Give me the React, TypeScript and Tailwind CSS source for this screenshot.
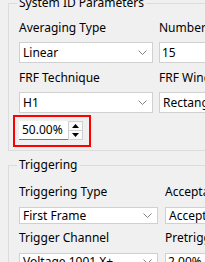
import React from 'react';

function Chevron() {
  return (
    <svg width="9" height="6" viewBox="0 0 9 6" className="shrink-0">
      <polyline points="0.5,0.5 4.5,4.5 8.5,0.5" fill="none" stroke="#808080" strokeWidth="1" />
    </svg>
  );
}

function Combo({ value, h }: { value: string; h: string }) {
  return (
    <div className={`flex items-center justify-between bg-white border border-[#d0d0d0] pl-[3px] pr-[5px] ${h}`}>
      <span className="whitespace-nowrap">{value}</span>
      <Chevron />
    </div>
  );
}

function TextBox({ value, h }: { value: string; h: string }) {
  return (
    <div className={`flex items-center bg-white border border-[#d0d0d0] pl-[2px] ${h}`}>
      <span className="whitespace-nowrap">{value}</span>
    </div>
  );
}

function Label({ text, cls }: { text: string; cls: string }) {
  return <div className={`h-[20px] leading-[20px] whitespace-nowrap ${cls}`}>{text}</div>;
}

function SpinBox({ value }: { value: string }) {
  return (
    <div className="flex h-[19px] w-[64px]">
      <div className="flex items-center w-[49px] bg-white border-b border-[#7a7a7a] pl-[3px]">
        <span>{value}</span>
      </div>
      <div className="flex flex-col w-[15px] border border-[#d0d0d0] bg-[#fafafa]">
        <div className="flex flex-1 items-center justify-center border-b border-[#d0d0d0]">
          <svg width="7" height="4" viewBox="0 0 7 4">
            <polygon points="0,4 3.5,0 7,4" fill="#000" />
          </svg>
        </div>
        <div className="flex flex-1 items-center justify-center">
          <svg width="7" height="4" viewBox="0 0 7 4">
            <polygon points="0,0 3.5,4 7,0" fill="#000" />
          </svg>
        </div>
      </div>
    </div>
  );
}

export default function App() {
  return (
    <div className="w-[205px] h-[262px] overflow-hidden bg-[#f0f0f0] font-['Noto_Sans',sans-serif] text-[12px] text-black">
      <div className="pl-[8px]">
        <fieldset className="-mt-[5px] w-[400px] border border-[#dcdcdc] pl-[8px] pt-[7px] pb-[10px]">
          <legend className="px-[2px] leading-[16px]">System ID Parameters</legend>
          <div className="pl-[2px] grid grid-cols-[134px_200px] gap-x-[6px]">
            <div className="flex flex-col">
              <Label text="Averaging Type" cls="" />
              <div className="mt-[4px]">
                <Combo value="Linear" h="h-[21px]" />
              </div>
              <Label text="FRF Technique" cls="mt-[5px]" />
              <div className="mt-[4px]">
                <Combo value="H1" h="h-[21px]" />
              </div>
              <div className="mt-[8px] relative w-[64px]">
                <SpinBox value="50.00%" />
                <div className="absolute -left-[6px] -top-[6px] w-[78px] h-[32px] border-2 border-[#ff0000]" />
              </div>
            </div>
            <div className="flex flex-col">
              <Label text="Number of Averages" cls="" />
              <div className="mt-[4px]">
                <TextBox value="15" h="h-[21px]" />
              </div>
              <Label text="FRF Window" cls="mt-[5px]" />
              <div className="mt-[4px]">
                <Combo value="Rectangular" h="h-[21px]" />
              </div>
            </div>
          </div>
        </fieldset>

        <fieldset className="mt-[6px] w-[400px] border border-[#dcdcdc] pl-[8px] pt-[9px] pb-[10px]">
          <legend className="px-[2px] leading-[16px]">Triggering</legend>
          <div className="pl-[2px] grid grid-cols-[139px_200px] gap-x-[7px]">
            <div className="flex flex-col">
              <Label text="Triggering Type" cls="" />
              <div className="mt-[5px]">
                <Combo value="First Frame" h="h-[17px]" />
              </div>
              <Label text="Trigger Channel" cls="mt-[4px]" />
              <div className="mt-[5px]">
                <Combo value="Voltage 1001 X+" h="h-[17px]" />
              </div>
            </div>
            <div className="flex flex-col">
              <Label text="Acceptance" cls="" />
              <div className="mt-[5px]">
                <Combo value="Accept All" h="h-[17px]" />
              </div>
              <Label text="Pretrigger" cls="mt-[4px]" />
              <div className="mt-[5px]">
                <TextBox value="2.00%" h="h-[17px]" />
              </div>
            </div>
          </div>
        </fieldset>
      </div>
    </div>
  );
}
